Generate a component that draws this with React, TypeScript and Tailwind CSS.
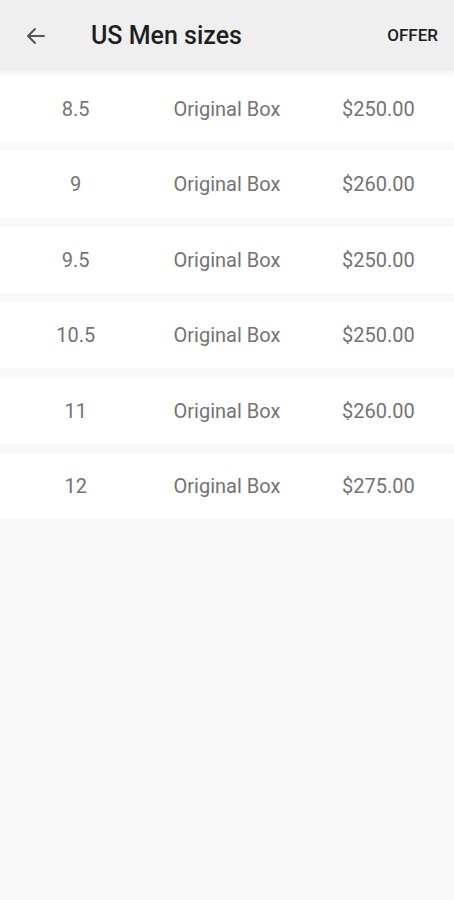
import React from "react";

const rows = [
  ["8.5", "Original Box", "$250.00"],
  ["9", "Original Box", "$260.00"],
  ["9.5", "Original Box", "$250.00"],
  ["10.5", "Original Box", "$250.00"],
  ["11", "Original Box", "$260.00"],
  ["12", "Original Box", "$275.00"],
];

export default function App() {
  return (
    <div className="w-[454px] min-h-[900px] bg-[#f9f9f9] font-['Roboto',sans-serif]">
      <div className="h-[70px] pt-[2px] bg-[#efefef] flex items-center shadow-[0_2px_4px_rgba(0,0,0,0.03)]">
        <div className="w-[91px] flex items-center pl-[24px]">
          <svg width="24" height="24" viewBox="0 0 24 24" fill="none">
            <path d="M20 12H5M11 5l-7 7 7 7" stroke="#555" strokeWidth="2" strokeLinecap="round" strokeLinejoin="round" />
          </svg>
        </div>
        <div className="flex-1 text-[25px] font-medium text-[#1e1e1e]">US Men sizes</div>
        <div className="pr-[16px] text-[17px] font-medium text-[#1e1e1e]">OFFER</div>
      </div>
      <div className="pt-[6px]">
        {rows.map((r, i) => (
          <div key={i} className="h-[66px] mb-[9.4px] bg-white grid grid-cols-3 items-center text-center text-[20px] text-[#737373]">
            <div>{r[0]}</div>
            <div>{r[1]}</div>
            <div>{r[2]}</div>
          </div>
        ))}
      </div>
    </div>
  );
}
